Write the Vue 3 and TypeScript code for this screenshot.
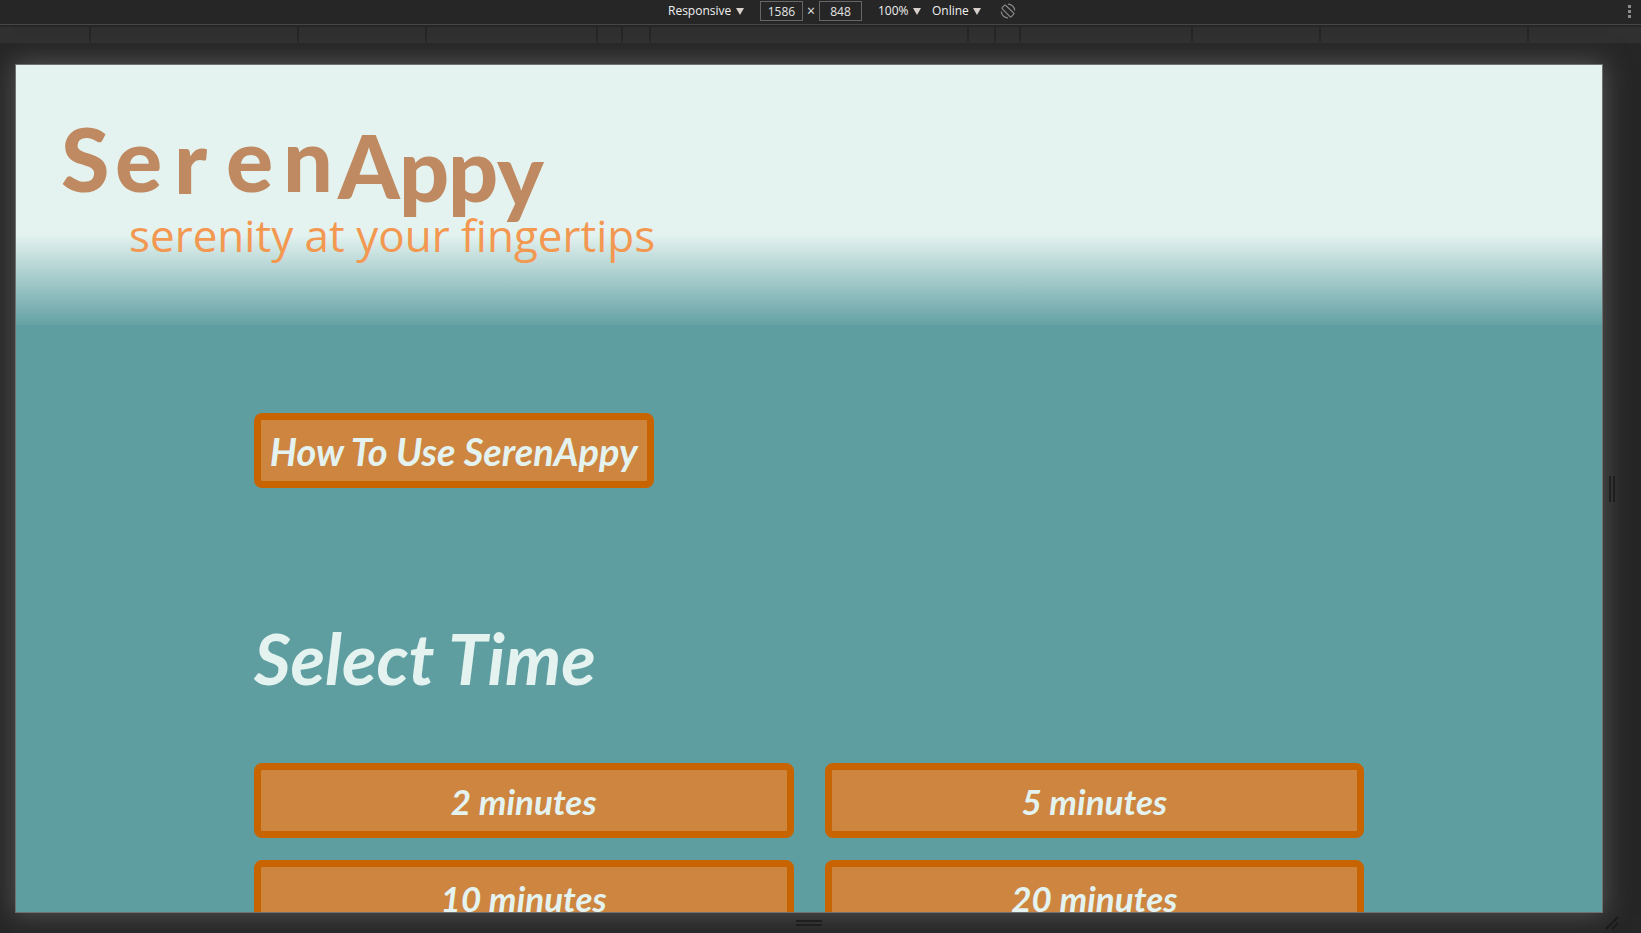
<script setup lang="ts">
import { ref } from 'vue'

const device = ref('Responsive')
const zoom = ref('100%')
const network = ref('Online')
const viewportWidth = ref('1586')
const viewportHeight = ref('848')

const rulerSegments: number[] = [89, 206, 126, 169, 23, 26, 316, 25, 23, 170, 126, 206]

const times: string[] = ['2 minutes', '5 minutes', '10 minutes', '20 minutes']
</script>

<template>
  <div class="devtools">
    <div class="toolbar">
      <div class="controls">
        <label class="picker">
          <select v-model="device" aria-label="Device"><option>Responsive</option></select>
          <span class="caret"></span>
        </label>
        <div class="size">
          <input v-model="viewportWidth" aria-label="Width" type="text" />
          <span class="times">×</span>
          <input v-model="viewportHeight" aria-label="Height" type="text" />
        </div>
        <label class="picker">
          <select v-model="zoom" aria-label="Zoom"><option>100%</option></select>
          <span class="caret"></span>
        </label>
        <label class="picker">
          <select v-model="network" aria-label="Network"><option>Online</option></select>
          <span class="caret"></span>
        </label>
        <button class="rotate" type="button" aria-label="Rotate">
          <svg width="16" height="16" viewBox="0 0 16 16" fill="none" stroke="#8a8a8a" stroke-width="1.2">
            <path d="M4.2 2.6 2.4 4.4a1 1 0 0 0 0 1.4l7.5 7.8a1 1 0 0 0 1.4 0l2.3-2.3a1 1 0 0 0 0-1.4L5.8 2.5a1 1 0 0 0-1.6.1Z" />
            <path d="M8 1.2a6.6 6.6 0 0 1 6.7 6.2M1.3 8.4A6.6 6.6 0 0 0 8 14.8" />
          </svg>
        </button>
      </div>
      <button class="more" type="button" aria-label="More options"><i></i><i></i><i></i></button>
    </div>

    <div class="ruler">
      <span v-for="(w, i) in rulerSegments" :key="i" class="segment" :style="{ flexGrow: w }"></span>
      <span class="rest"></span>
    </div>

    <div class="stage">
      <div class="screen">
        <header class="hero">
          <svg class="logo" viewBox="0 0 640 200" role="img" aria-label="SerenAppy, serenity at your fingertips">
            <text class="brand" x="-3 51 110 162 219 274 335 384 433" y="117 117 119 117 117 124 127 127 132">SerenAppy</text>
            <text class="tagline" x="65" y="177">serenity at your fingertips</text>
          </svg>
        </header>
        <main class="content">
          <button class="action guide" type="button">How To Use SerenAppy</button>
          <h1>Select Time</h1>
          <div class="options">
            <button v-for="time in times" :key="time" class="action" type="button">{{ time }}</button>
          </div>
        </main>
      </div>
      <button class="handle side" type="button" aria-label="Resize width"><i></i><i></i></button>
      <button class="handle bottom" type="button" aria-label="Resize height"><i></i><i></i></button>
      <button class="handle corner" type="button" aria-label="Resize both">
        <svg width="14" height="14" viewBox="0 0 14 14" stroke="#1b1b1b" stroke-width="2">
          <path d="M1 13 13 1M7 13l6-6" />
        </svg>
      </button>
    </div>
  </div>
</template>

<style>
body {
  margin: 0;
  background: #262626;
}
</style>

<style scoped>
* {
  box-sizing: border-box;
}

button {
  border: 0;
  padding: 0;
  background: none;
  cursor: pointer;
}

.devtools {
  display: flex;
  flex-direction: column;
  height: 100vh;
  overflow: hidden;
  background: #262626;
  font-family: 'Open Sans', 'Noto Sans', sans-serif;
}

.toolbar {
  display: flex;
  align-items: center;
  flex: none;
  height: 25px;
  padding: 0 10px 2px 56px;
  border-bottom: 1px solid #464646;
}

.controls {
  display: flex;
  align-items: center;
  justify-content: center;
  flex: 1;
  gap: 16px;
}

.picker {
  display: flex;
  align-items: center;
  gap: 4px;
}

.picker + .picker {
  margin-left: -5px;
}

.picker select {
  appearance: none;
  border: 0;
  padding: 0;
  background: transparent;
  color: #f0f0f0;
  font: 12px/16px 'Open Sans', sans-serif;
}

.caret {
  border: 4px solid transparent;
  border-top: 7px solid #d8d0cc;
  border-bottom: 0;
}

.size {
  display: flex;
  align-items: center;
  gap: 4px;
}

.size input {
  width: 43px;
  height: 20px;
  border: 1px solid #666;
  padding: 0;
  background: transparent;
  color: #e4e4e4;
  font: 12px/16px 'Open Sans', sans-serif;
  text-align: center;
}

.times {
  color: #e4e4e4;
  font-size: 14px;
  line-height: 16px;
}

.rotate {
  display: flex;
  margin-left: 3px;
}

.more {
  display: grid;
  gap: 2px;
}

.more i {
  width: 3px;
  height: 3px;
  background: #8c8c8c;
}

.ruler {
  display: flex;
  flex: none;
  height: 16px;
  margin-top: 2px;
  background: #303030;
}

.segment {
  flex-basis: 0;
  height: 15px;
  border-right: 2px solid #262626;
}

.rest {
  flex: 112 0 0;
}

.stage {
  display: grid;
  grid-template: minmax(0, 1fr) 20px / minmax(0, 1fr) 18px;
  flex: 1;
  min-height: 0;
  padding: 21px 20px 0 15px;
}

.screen {
  overflow: hidden;
  border: 1px solid #707070;
  background: #5f9ea0;
  box-shadow: 0 0 24px 2px #525252;
}

.hero {
  height: 260px;
  padding: 10px 48px;
  background: linear-gradient(#e4f3f0 65%, #65a2a4);
}

.logo {
  display: block;
  width: 640px;
  max-width: 100%;
  overflow: visible;
}

.brand {
  fill: #bf8a61;
  font: 900 88px Lato, sans-serif;
}

.tagline {
  fill: #f39851;
  font: 44px 'Open Sans', sans-serif;
}

.content {
  padding: 88px 15% 0;
}

.action {
  height: 75px;
  border: 7px solid #c86400;
  border-radius: 8px;
  background: #cd853f;
  color: #e4f3f0;
  font: italic 700 35px/44px Lato, sans-serif;
}

.guide {
  width: 36%;
  font-size: 38px;
}

h1 {
  margin: 122px 0 58px;
  color: #e4f3f0;
  font: italic 700 71px/95px Lato, sans-serif;
}

.options {
  display: grid;
  grid-template-columns: 1fr 1fr;
  gap: 22px 31px;
}

.handle {
  display: flex;
  align-items: center;
  justify-content: center;
  gap: 2px;
}

.handle i {
  background: #1e1e1e;
}

.side i {
  width: 2px;
  height: 26px;
}

.bottom {
  flex-direction: column;
}

.bottom i {
  width: 26px;
  height: 2px;
}
</style>
